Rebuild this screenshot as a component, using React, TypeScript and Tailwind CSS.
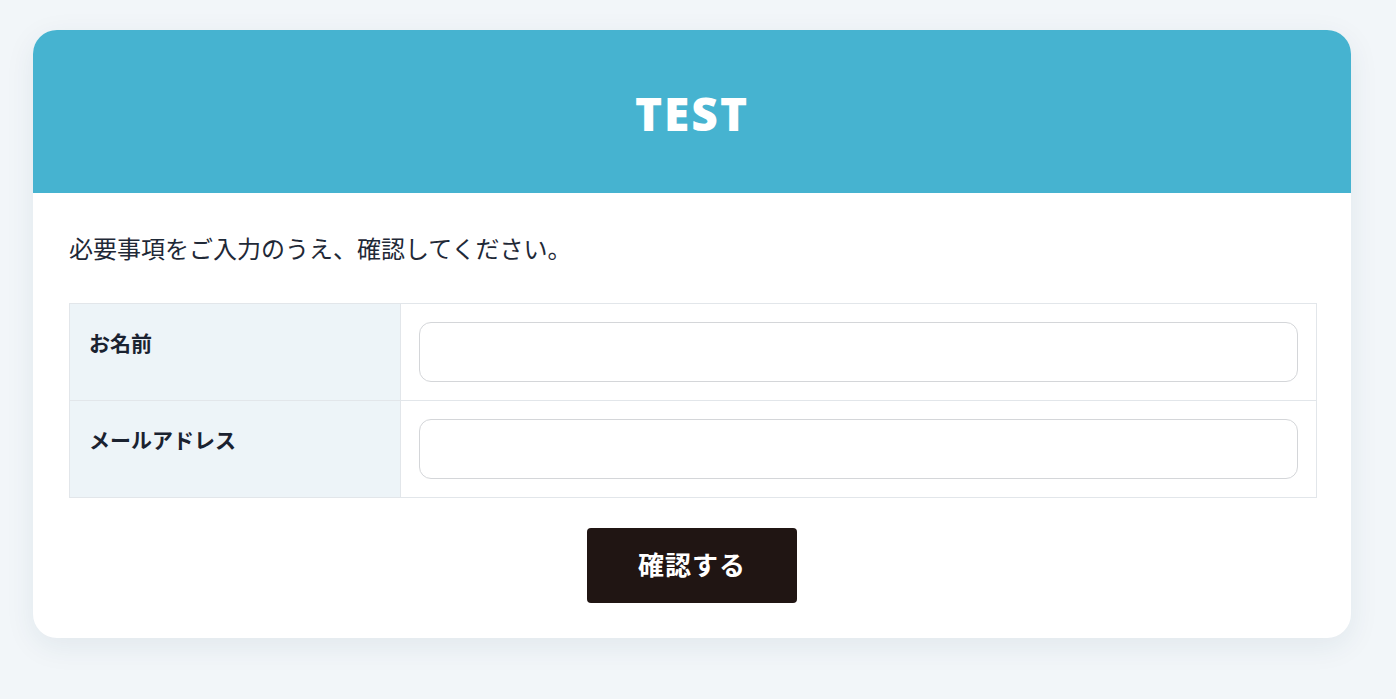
import { useState } from 'react';

const fields = [
    { label: 'お名前', name: 'name', type: 'text' },
    { label: 'メールアドレス', name: 'email', type: 'email' },
];

export default function App() {
    const [values, setValues] = useState<Record<string, string>>({ name: '', email: '' });

    return (
        <div className="min-h-screen bg-[#f2f6f9] pt-[30px] pb-[61px] font-['Noto_Sans','Noto_Sans_CJK_JP',sans-serif] text-[#1f2937]">
            <div className="ml-[33px] w-[1318px] rounded-[24px] bg-white shadow-[0_8px_30px_rgba(30,60,90,0.08)] overflow-hidden">
                <div className="h-[163px] bg-[#46b3d0] flex items-center justify-center">
                    <h1 className="text-white font-black text-[46px] tracking-[2px] leading-none pt-[2px]">TEST</h1>
                </div>
                <div className="pl-[36px] pr-[34px] pt-[38px] pb-[35px]">
                    <p className="text-[24px] leading-[36px] text-[#1f2937]">必要事項をご入力のうえ、確認してください。</p>
                    <div className="mt-[36px] border-t border-x border-[#e2e6ea]">
                        {fields.map((f) => (
                            <div key={f.name} className="flex h-[97px] border-b border-[#e2e6ea]">
                                <div className="w-[331px] shrink-0 bg-[#edf4f8] border-r border-[#e2e6ea] pl-[19px] pt-[24px]">
                                    <span className="font-bold text-[21px] text-[#1a2230]">{f.label}</span>
                                </div>
                                <div className="flex-1 pl-[18px] pr-[18px] pt-[18px]">
                                    <input
                                        type={f.type}
                                        value={values[f.name]}
                                        onChange={(e) => setValues({ ...values, [f.name]: e.target.value })}
                                        className="w-full h-[60px] rounded-[12px] border border-[#d4d6d9] px-4 text-[18px] outline-none"
                                    />
                                </div>
                            </div>
                        ))}
                    </div>
                    <div className="flex justify-center mt-[30px] pr-[2px]">
                        <button className="w-[210px] h-[75px] rounded-[4px] bg-[#201513] text-white font-bold text-[26px] tracking-[1px]">
                            確認する
                        </button>
                    </div>
                </div>
            </div>
        </div>
    );
}
